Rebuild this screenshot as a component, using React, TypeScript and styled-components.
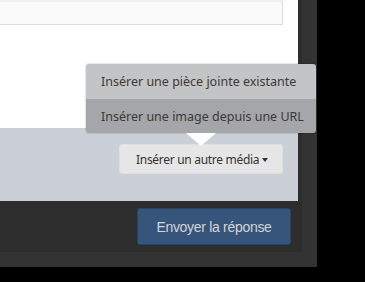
import styled, { createGlobalStyle } from 'styled-components';

const GlobalStyle = createGlobalStyle`
  html, body {
    margin: 0;
    padding: 0;
    background: #000;
  }
`;

const Frame = styled.div`
  width: 317px;
  height: 267px;
  background: #333;
`;

const Panel = styled.div`
  width: 302px;
  height: 252px;
  background: #2d2d2d;
  display: flex;
  flex-direction: column;
`;

const Editor = styled.div`
  width: 298px;
  height: 128px;
  background: #fff;
`;

const TextBox = styled.div`
  width: 282px;
  height: 22px;
  background: #fafafa;
  border-top: 2px solid #f0f0f0;
  border-right: 1px solid #dcdcdc;
  border-bottom: 1px solid #dcdcdc;
`;

const Toolbar = styled.div`
  width: 298px;
  height: 73px;
  box-sizing: border-box;
  background: #cbd0d8;
  display: flex;
  justify-content: flex-end;
  align-items: flex-start;
  padding: 16px 15px 0 0;
`;

const MediaWrap = styled.div`
  position: relative;
`;

const MediaButton = styled.button`
  display: flex;
  align-items: center;
  gap: 3px;
  width: 164px;
  height: 30px;
  box-sizing: border-box;
  padding: 0 0 0 16px;
  background: #e6e6e6;
  border: 1px solid #dfe0e2;
  border-radius: 3px;
  color: #333;
  font-family: 'Noto Sans', sans-serif;
  font-size: 12px;
  letter-spacing: -0.3px;
  cursor: pointer;
`;

const Caret = styled.span`
  width: 0;
  height: 0;
  border-left: 3.5px solid transparent;
  border-right: 3.5px solid transparent;
  border-top: 4px solid #333;
  margin-top: 1px;
`;

const Menu = styled.ul`
  position: absolute;
  left: -33px;
  top: -80px;
  width: 230px;
  margin: 0;
  padding: 0;
  list-style: none;
  border-radius: 3px;
  box-shadow: 0 0 2px rgba(0, 0, 0, 0.35);
  z-index: 2;

  &::after {
    content: '';
    position: absolute;
    left: 100px;
    bottom: -13px;
    border-left: 15px solid transparent;
    border-right: 15px solid transparent;
    border-top: 13px solid #fff;
  }
`;

const MenuItem = styled.li<{ $active?: boolean }>`
  height: ${(p) => (p.$active ? 34 : 35)}px;
  display: flex;
  align-items: center;
  padding-left: 15px;
  background: ${(p) => (p.$active ? '#a4a6a9' : '#c3c4c6')};
  color: #3d3934;
  font-family: 'Noto Sans', sans-serif;
  font-size: 12.5px;
  border-radius: ${(p) => (p.$active ? '0 0 3px 3px' : '3px 3px 0 0')};
`;

const Footer = styled.div`
  flex: 1;
  display: flex;
  justify-content: flex-end;
  align-items: flex-start;
  padding: 7px 11px 0 0;
`;

const SendButton = styled.button`
  width: 154px;
  height: 37px;
  box-sizing: border-box;
  background: #37547a;
  border: 1px solid #2b4463;
  border-radius: 3px;
  color: #d2d4d8;
  font-family: 'Liberation Sans', Arial, sans-serif;
  font-size: 14px;
  letter-spacing: -0.3px;
  cursor: pointer;
`;

export default function App() {
  return (
    <>
      <GlobalStyle />
      <Frame>
        <Panel>
          <Editor>
            <TextBox />
          </Editor>
          <Toolbar>
            <MediaWrap>
              <Menu>
                <MenuItem>Insérer une pièce jointe existante</MenuItem>
                <MenuItem $active>Insérer une image depuis une URL</MenuItem>
              </Menu>
              <MediaButton>
                Insérer un autre média
                <Caret />
              </MediaButton>
            </MediaWrap>
          </Toolbar>
          <Footer>
            <SendButton>Envoyer la réponse</SendButton>
          </Footer>
        </Panel>
      </Frame>
    </>
  );
}
